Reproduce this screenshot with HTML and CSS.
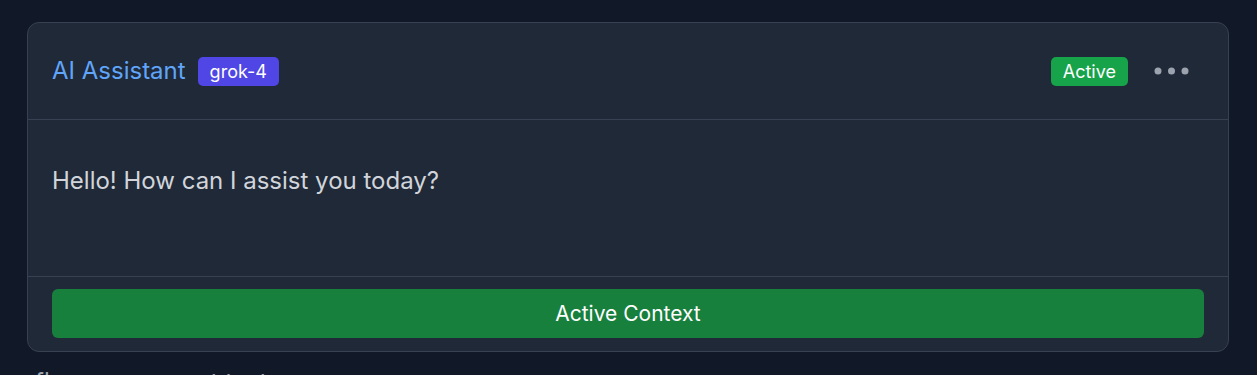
FILE: index.html
```html
<!DOCTYPE html>
<html>
<head>
<meta charset="utf-8">
<link rel="stylesheet" href="styles.css">
</head>
<body>
<div class="page">
  <div class="card">
    <div class="card-header">
      <div class="title-group">
        <span class="title">AI Assistant</span>
        <span class="badge badge-model">grok-4</span>
      </div>
      <div class="actions">
        <span class="badge badge-status">Active</span>
        <button class="more" aria-label="More">
          <svg width="36" height="8" viewBox="0 0 36 8"><circle cx="4" cy="4" r="3.5" fill="#9ca3af"/><circle cx="17.5" cy="4" r="3.5" fill="#9ca3af"/><circle cx="31" cy="4" r="3.5" fill="#9ca3af"/></svg>
        </button>
      </div>
    </div>
    <div class="card-body">
      <p class="message">Hello! How can I assist you today?</p>
    </div>
    <div class="card-footer">
      <button class="context-btn">Active Context</button>
    </div>
  </div>
  <div class="caption">flow component test</div>
</div>
</body>
</html>
```
FILE: styles.css
```css
* { box-sizing: border-box; }
html, body { margin: 0; padding: 0; }
body {
  background: #111827;
  font-family: Inter, "Noto Sans", sans-serif;
  color: #d1d5db;
  height: 375px;
  overflow: hidden;
}
.page {
  padding: 22px 28px 0 27px;
}
.card {
  background: #1f2937;
  border: 1px solid #374151;
  border-radius: 12px;
  overflow: hidden;
}
.card-header {
  display: flex;
  align-items: center;
  justify-content: space-between;
  height: 97px;
  padding: 0 24px;
  border-bottom: 1px solid #374151;
}
.title-group {
  display: flex;
  align-items: center;
  gap: 12px;
}
.title {
  color: #60a5fa;
  font-size: 24px;
  line-height: 32px;
}
.badge {
  display: inline-flex;
  align-items: center;
  justify-content: center;
  height: 29px;
  padding: 0 12px;
  border-radius: 5px;
  color: #ffffff;
  font-size: 18px;
}
.badge-model { background: #4f46e5; }
.badge-status { background: #16a34a; }
.actions {
  display: flex;
  align-items: center;
  gap: 26px;
}
.more {
  background: none;
  border: 0;
  padding: 0;
  margin-right: 14px;
  display: flex;
  align-items: center;
  cursor: pointer;
}
.card-body {
  height: 157px;
  padding: 45px 24px 0;
  border-bottom: 1px solid #374151;
}
.message {
  margin: 0;
  font-size: 24px;
  line-height: 32px;
  color: #d1d5db;
}
.card-footer {
  padding: 12px 24px 13px;
}
.context-btn {
  display: block;
  width: 100%;
  height: 49px;
  border: 0;
  border-radius: 6px;
  background: #18803d;
  color: #ffffff;
  font-family: Inter, "Noto Sans", sans-serif;
  font-size: 21px;
}
.caption {
  margin-top: 14px;
  padding-left: 8px;
  font-size: 24px;
  line-height: 32px;
  height: 32px;
  color: #9ca3af;
}
```
